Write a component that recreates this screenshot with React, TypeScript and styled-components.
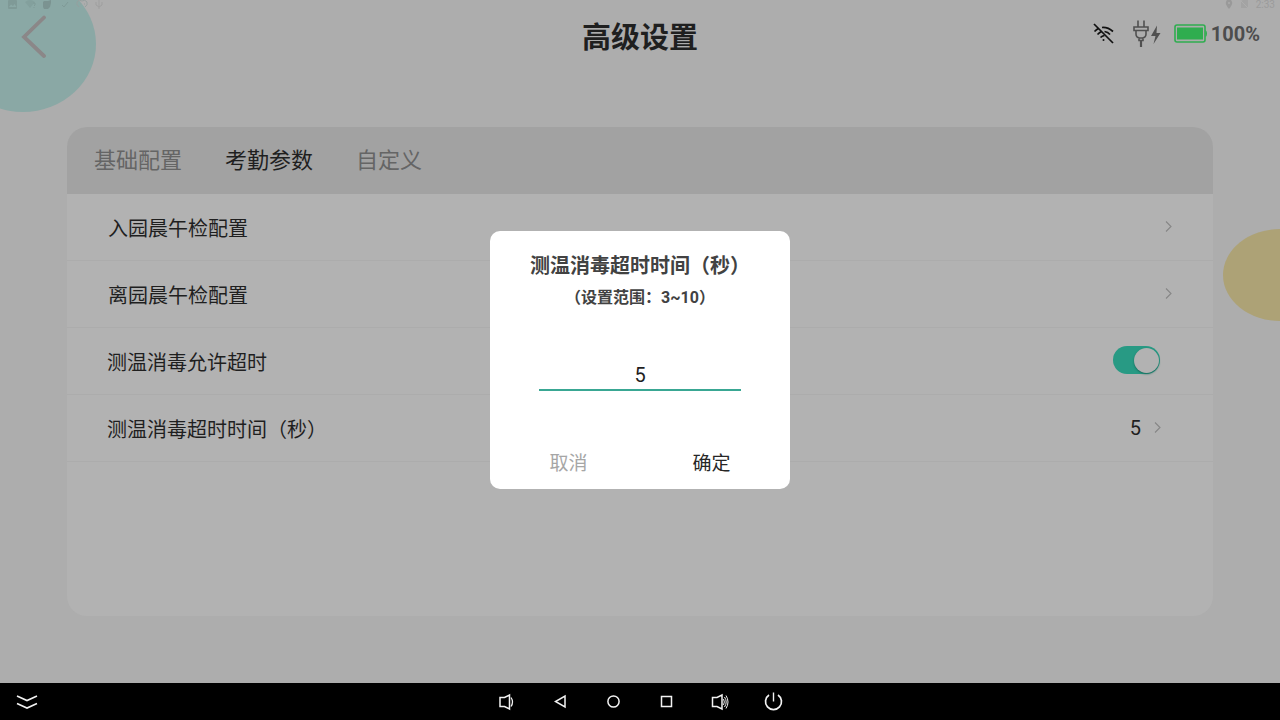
import React, { useState } from "react";
import styled, { createGlobalStyle } from "styled-components";

const Global = createGlobalStyle`
  * { box-sizing: border-box; }
  body { margin: 0; background: #adadad; color: #1f1f1f; font-family: Roboto, "Noto Sans CJK SC", sans-serif; }
  button, input { font-family: inherit; }
  h1, h2, p { margin: 0; }
`;

const Screen = styled.div`
  position: relative;
  display: flex;
  flex-direction: column;
  min-height: 100vh;
  overflow: hidden;
`;

const Blob = styled.div<{ $tone: "teal" | "sand" }>`
  position: absolute;
  border-radius: 50%;
  ${({ $tone }) =>
    $tone === "teal"
      ? "left: -50px; top: -24px; width: 146px; height: 136px; background: #8aa8a5;"
      : "right: -57px; top: 229px; width: 114px; height: 92px; background: #ada276;"}
`;

const StatusBar = styled.div`
  position: relative;
  display: flex;
  justify-content: space-between;
  height: 10px;
  padding: 0 5px 0 7px;
  color: #9b9b9b;
  font-size: 10px;
  line-height: 10px;
`;

const StatusGroup = styled.div`
  display: flex;
  align-items: center;
  gap: 7px;
`;

const Header = styled.header`
  position: relative;
  display: grid;
  grid-template-columns: 1fr auto 1fr;
  align-items: center;
  height: 54px;
  padding: 0 20px;
`;

const BackButton = styled.button`
  display: flex;
  width: 28px;
  padding: 0;
  border: 0;
  background: none;
`;

const PageTitle = styled.h1`
  padding-top: 1px;
  font-size: 29px;
  line-height: 40px;
  font-weight: 700;
`;

const Indicators = styled.div`
  display: flex;
  justify-content: flex-end;
  align-items: center;
  height: 48px;
  margin-bottom: 6px;
`;

const WifiSlot = styled.span`
  display: flex;
  margin-right: 18px;
`;

const PlugSlot = styled.span`
  display: flex;
  margin-right: 13px;
`;

const BatteryLabel = styled.span`
  margin-left: 4px;
  color: #4d4d4d;
  font-size: 20px;
  line-height: 24px;
  font-weight: 700;
`;

const Panel = styled.main`
  position: relative;
  flex: 1;
  margin: 63px 67px 67px;
  border-radius: 20px;
  background: #b2b2b2;
  overflow: hidden;
`;

const Tabs = styled.nav`
  display: flex;
  gap: 43px;
  height: 67px;
  padding: 0 27px;
  background: #a2a2a2;
`;

const Tab = styled.button<{ $active?: boolean }>`
  padding: 0;
  border: 0;
  background: none;
  color: ${({ $active }) => ($active ? "#1f1f1f" : "#656565")};
  font-size: 22px;
  line-height: 67px;
`;

const Row = styled.div<{ $link?: boolean }>`
  display: flex;
  align-items: center;
  justify-content: space-between;
  height: 67px;
  padding: 0 ${({ $link }) => ($link ? "41px" : "52px")} 0 ${({ $link }) => ($link ? "41px" : "40px")};
  border-bottom: 1px solid #acacac;
  font-size: 20px;
`;

const RowAction = styled.button`
  display: flex;
  align-items: center;
  gap: 12px;
  padding: 0;
  border: 0;
  background: none;
  color: #1f1f1f;
  font-size: 20px;
`;

const Switch = styled.input`
  appearance: none;
  display: flex;
  align-items: center;
  justify-content: flex-end;
  width: 47px;
  height: 28px;
  margin: 0 1px 2px;
  padding: 1px;
  border-radius: 14px;
  background: #289a84;
  &::before {
    content: "";
    width: 25px;
    height: 25px;
    border-radius: 50%;
    background: #b2b2b2;
    box-shadow: 0 1px 2px #17695a;
  }
  &:not(:checked) { justify-content: flex-start; background: #999999; }
`;

const Scrim = styled.div`
  position: absolute;
  inset: 0 0 37px;
  display: flex;
  align-items: center;
  justify-content: center;
  padding-top: 37px;
`;

const Dialog = styled.form`
  display: flex;
  flex-direction: column;
  align-items: center;
  width: 300px;
  padding: 20px 24px 10px;
  border-radius: 10px;
  background: #ffffff;
`;

const DialogTitle = styled.h2`
  color: #424242;
  font-size: 20px;
  line-height: 30px;
  font-weight: 700;
`;

const DialogHint = styled.p`
  margin-top: 5px;
  color: #424242;
  font-size: 16px;
  line-height: 24px;
  font-weight: 700;
`;

const NumberField = styled.input`
  width: 202px;
  height: 35px;
  margin: 46px 0 54px;
  padding: 5px 0 0;
  border: 0;
  border-bottom: 2px solid #39a793;
  outline: none;
  background: none;
  color: #1f1f1f;
  font-size: 20px;
  text-align: center;
`;

const DialogActions = styled.div`
  display: grid;
  grid-template-columns: 1fr 1fr;
  gap: 34px;
  width: 100%;
`;

const DialogButton = styled.button<{ $primary?: boolean }>`
  height: 34px;
  padding: 0 0 2px;
  border: 0;
  background: none;
  color: ${({ $primary }) => ($primary ? "#262626" : "#a6a6a6")};
  font-size: 19px;
`;

const NavBar = styled.footer`
  position: relative;
  display: grid;
  grid-template-columns: 1fr auto 1fr;
  align-items: center;
  height: 37px;
  padding: 0 15px;
  background: #000000;
`;

const NavGroup = styled.div`
  display: flex;
  gap: 29px;
`;

const NavButton = styled.button`
  display: flex;
  width: 24px;
  padding: 0;
  border: 0;
  background: none;
  color: #f2f2f2;
`;

const Chevron = () => (
  <svg width="8" height="12" viewBox="0 0 8 12" fill="none" stroke="#868686" strokeWidth="1.1">
    <path d="M2 .5L7 5.500l-5 5" />
  </svg>
);

const navIcons: { label: string; art: React.ReactNode }[] = [
  { label: "降低音量", art: <><path d="M4 7.500h4.500l5-2.500v14l-5-2.500H4z" /><path d="M15 7.500q3 4.500 0 9" strokeWidth="1.300" /></> },
  { label: "返回", art: <path d="M16 6v11L6.500 11.500z" /> },
  { label: "主页", art: <circle cx="11.500" cy="11.500" r="5.600" /> },
  { label: "最近任务", art: <path d="M6.500 6.500h10v10h-10z" /> },
  { label: "提高音量", art: <><path d="M4.500 7.500H9l5-2.500v14l-5-2.500H4.500z" /><path d="M15.500 9q1.600 3 0 6M16.500 7q3.400 5 0 10M18 5.500q4 6.500 0 13" strokeWidth="1" /></> },
  { label: "电源", art: <><path d="M12.500 2.500v9" strokeWidth="1.400" /><path d="M8 5a8 8 0 1 0 9 0" strokeWidth="1.700" /></> },
];

export default function App() {
  const [seconds, setSeconds] = useState("5");
  const [allowed, setAllowed] = useState(true);
  return (
    <>
      <Global />
      <Screen>
        <Blob $tone="teal" />
        <Blob $tone="sand" />
        <StatusBar>
          <StatusGroup>
            <svg width="96" height="10" viewBox="0 0 96 10" fill="none" stroke="#7f9a97">
              <rect x="1" y="0" width="9" height="9" rx="1" fill="#7f9a97" stroke="none" />
              <path d="M2 7l2-2.500 2 1.500 1.500-2L9.500 7z" fill="#8aa8a5" stroke="none" />
              <path d="M18 2q5-4 10 0l-5 6z" fill="#83a09d" stroke="none" />
              <path d="M26 3h2v2l-1 1M27 7v1" stroke="#7f9a97" />
              <path d="M37 1h4l3-1v3l-1 4-2 2h-4l-1-2V2z" fill="#7b9391" stroke="none" />
              <path d="M55 5l2 2 4-5" />
              <path d="M72 7q-3-2-2-5 2-3 5-1 3-2 5 1 1 3-2 5M73 4h1M77 4h1" stroke="#959f9e" />
              <path d="M92 0v9M89 2v3l3 2 3-2V2" stroke="#9f9f9f" />
            </svg>
          </StatusGroup>
          <StatusGroup>
            <svg width="24" height="10" viewBox="0 0 24 10" fill="#999999">
              <path d="M4 9Q0 4 1 2q1-3 3-3t3 3q1 2-3 7z" />
              <circle cx="4" cy="3" r="1" fill="#adadad" />
              <path d="M16 1l2-1h5v8h-7z" fill="#a3a3a3" />
              <path d="M15 0l8 8" stroke="#adadad" />
            </svg>
            <span>2:33</span>
          </StatusGroup>
        </StatusBar>
        <Header>
          <BackButton type="button" aria-label="返回上一页">
            <svg width="28" height="44" viewBox="0 0 28 44" fill="none" stroke="#8b8788" strokeWidth="3.800" strokeLinecap="round">
              <path d="M24 2.500L4 22l20 19" />
            </svg>
          </BackButton>
          <PageTitle>高级设置</PageTitle>
          <Indicators>
            <WifiSlot>
              <svg width="22" height="22" viewBox="0 0 22 22" fill="none" stroke="#111111" strokeWidth="1.700">
                <path d="M2 1l19 19" />
                <path d="M2.500 8.500q2-2 4-3M10 4.500q6-.500 11 4M5.500 11.500q2-2 4-3M12.500 8.500q3.500.500 5.500 3M8.500 14.500q1.500-1.500 4-2" />
                <circle cx="11.500" cy="17" r="1" fill="#111111" stroke="none" />
              </svg>
            </WifiSlot>
            <PlugSlot>
              <svg width="29" height="28" viewBox="0 0 29 28" fill="none" stroke="#505050" strokeWidth="1.600">
                <path d="M6 .5v6M12 .5v6M2 7h14v3.500H2zM4 10.500v3.500q0 3.500 3.500 4h3q3.500-.500 3.500-4v-3.500M7 18v2.500h4V18" />
                <path d="M9 20.500V27" strokeWidth="2.200" />
                <path d="M25 5.500L19 16h4.500l-2 8 7-11h-4z" fill="#505050" stroke="none" />
              </svg>
            </PlugSlot>
            <svg width="33" height="20" viewBox="0 0 33 20">
              <rect x="1" y="1" width="30" height="17" rx="2" fill="none" stroke="#2fad4f" strokeWidth="1.600" />
              <rect x="3" y="3.500" width="26" height="12" fill="#2fad4f" />
              <path d="M31.500 6q1.500 1 1.500 3.500T31.500 13z" fill="#2fad4f" />
            </svg>
            <BatteryLabel>100%</BatteryLabel>
          </Indicators>
        </Header>
        <Panel>
          <Tabs>
            <Tab type="button">基础配置</Tab>
            <Tab type="button" $active>考勤参数</Tab>
            <Tab type="button">自定义</Tab>
          </Tabs>
          <Row $link>
            <span id="entry">入园晨午检配置</span>
            <RowAction type="button" aria-labelledby="entry"><Chevron /></RowAction>
          </Row>
          <Row $link>
            <span id="leave">离园晨午检配置</span>
            <RowAction type="button" aria-labelledby="leave"><Chevron /></RowAction>
          </Row>
          <Row>
            <label htmlFor="allow">测温消毒允许超时</label>
            <Switch id="allow" type="checkbox" checked={allowed} onChange={(e) => setAllowed(e.target.checked)} />
          </Row>
          <Row>
            <span id="timeout">测温消毒超时时间（秒）</span>
            <RowAction type="button" aria-labelledby="timeout">5<Chevron /></RowAction>
          </Row>
        </Panel>
        <Scrim>
          <Dialog role="dialog" aria-labelledby="dialog-title" onSubmit={(e) => e.preventDefault()}>
            <DialogTitle id="dialog-title">测温消毒超时时间（秒）</DialogTitle>
            <DialogHint>（设置范围：3~10）</DialogHint>
            <NumberField aria-labelledby="dialog-title" inputMode="numeric" value={seconds} onChange={(e) => setSeconds(e.target.value)} />
            <DialogActions>
              <DialogButton type="button">取消</DialogButton>
              <DialogButton type="submit" $primary>确定</DialogButton>
            </DialogActions>
          </Dialog>
        </Scrim>
        <NavBar>
          <NavButton type="button" aria-label="收起导航栏">
            <svg width="24" height="24" viewBox="0 0 24 24" fill="none" stroke="currentColor" strokeWidth="1.600">
              <path d="M2 6l10 4.500L22 6M2 13.500L12 18l10-4.500" />
            </svg>
          </NavButton>
          <NavGroup>
            {navIcons.map(({ label, art }) => (
              <NavButton key={label} type="button" aria-label={label}>
                <svg width="24" height="24" viewBox="0 0 24 24" fill="none" stroke="currentColor" strokeWidth="1.500">{art}</svg>
              </NavButton>
            ))}
          </NavGroup>
        </NavBar>
      </Screen>
    </>
  );
}
